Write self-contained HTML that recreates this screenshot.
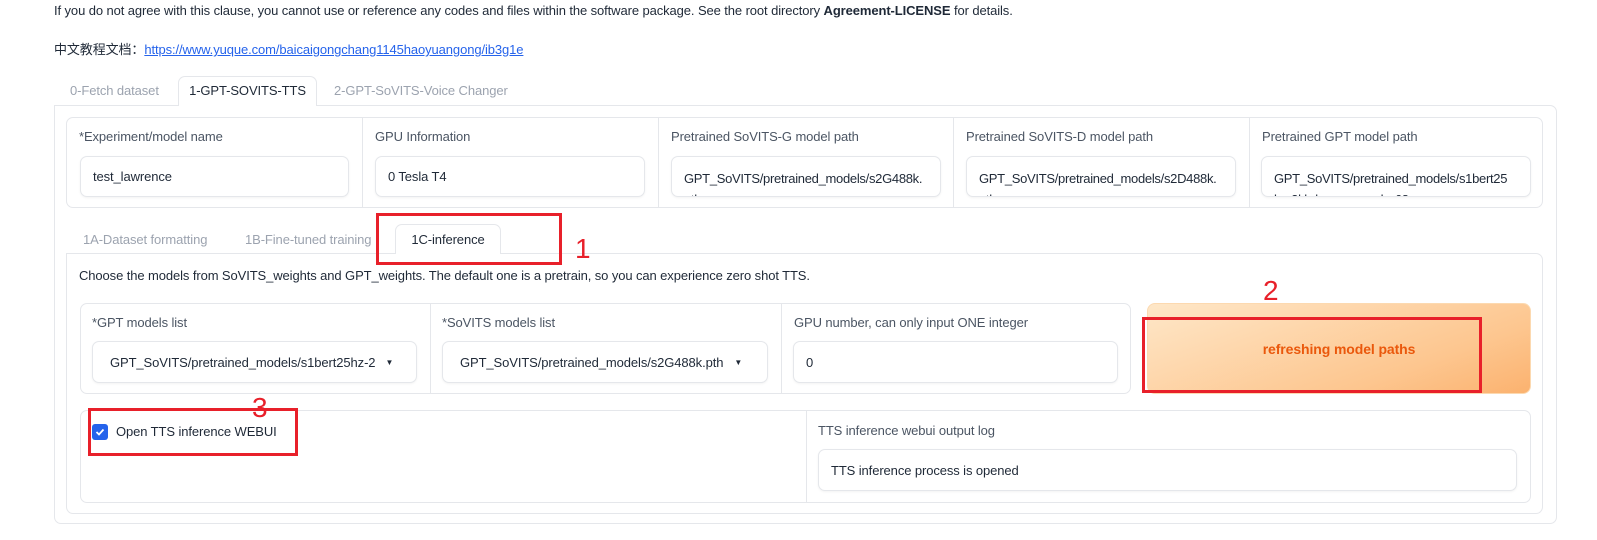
<!DOCTYPE html>
<html><head><meta charset="utf-8"><style>
*{box-sizing:border-box;margin:0;padding:0}
body{width:1597px;height:540px;background:#fff;font-family:"Liberation Sans","Noto Sans CJK SC",sans-serif;font-size:13px;color:#1f2937;position:relative;overflow:hidden;letter-spacing:-0.1px}
.a{position:absolute;white-space:nowrap}
.lbl{color:#4b5563;font-size:13px;line-height:16px}
.box{position:absolute;border:1px solid #e5e7eb;border-radius:7px;background:#fff}
.inp{position:absolute;border:1px solid #e5e7eb;border-radius:7px;background:#fff;box-shadow:0 1px 2px rgba(0,0,0,.05);padding:0 12px;display:flex;align-items:center;font-size:13px;color:#1f2937;white-space:nowrap;overflow:hidden}
.wrap{display:block;padding-top:11px;line-height:21px;letter-spacing:-0.3px}
.vl{position:absolute;width:1px;background:#e5e7eb}
.red{position:absolute;border:3px solid #e8202a}
.num{position:absolute;color:#e8202a;font-size:28px;line-height:24px}
.tab{position:absolute;font-size:13px;color:#9ca3af;white-space:nowrap;line-height:16px}
</style></head><body>
<div class="a" style="left:54px;top:3px;line-height:16px">If you do not agree with this clause, you cannot use or reference any codes and files within the software package. See the root directory <b>Agreement-LICENSE</b> for details.</div>
<div class="a" style="left:54px;top:42px;line-height:16px">中文教程文档：<span style="color:#2563eb;text-decoration:underline">https://www.yuque.com/baicaigongchang1145haoyuangong/ib3g1e</span></div>

<div class="box" style="left:54px;top:105px;width:1503px;height:419px;border-radius:0 7px 7px 7px"></div>
<div class="tab" style="left:70px;top:83px">0-Fetch dataset</div>
<div class="a" style="left:178px;top:76px;width:139px;height:30px;border:1px solid #e5e7eb;border-bottom:none;border-radius:7px 7px 0 0;background:#fff;text-align:center;line-height:28px;color:#1f2937">1-GPT-SOVITS-TTS</div>
<div class="tab" style="left:334px;top:83px">2-GPT-SoVITS-Voice Changer</div>

<div class="box" style="left:66px;top:117px;width:1477px;height:91px"></div>
<div class="vl" style="left:362px;top:118px;height:89px"></div>
<div class="vl" style="left:658px;top:118px;height:89px"></div>
<div class="vl" style="left:953px;top:118px;height:89px"></div>
<div class="vl" style="left:1249px;top:118px;height:89px"></div>
<div class="lbl a" style="left:79px;top:129px">*Experiment/model name</div>
<div class="lbl a" style="left:375px;top:129px">GPU Information</div>
<div class="lbl a" style="left:671px;top:129px">Pretrained SoVITS-G model path</div>
<div class="lbl a" style="left:966px;top:129px">Pretrained SoVITS-D model path</div>
<div class="lbl a" style="left:1262px;top:129px">Pretrained GPT model path</div>
<div class="inp" style="left:80px;top:156px;width:269px;height:41px">test_lawrence</div>
<div class="inp" style="left:375px;top:156px;width:270px;height:41px">0 Tesla T4</div>
<div class="inp wrap" style="left:671px;top:156px;width:270px;height:41px">GPT_SoVITS/pretrained_models/s2G488k.<br>pth</div>
<div class="inp wrap" style="left:966px;top:156px;width:270px;height:41px">GPT_SoVITS/pretrained_models/s2D488k.<br>pth</div>
<div class="inp wrap" style="left:1261px;top:156px;width:270px;height:41px">GPT_SoVITS/pretrained_models/s1bert25<br>hz-2kh-longer-epoch=68e-</div>

<div class="box" style="left:66px;top:253px;width:1477px;height:261px;border-radius:0 7px 7px 7px"></div>
<div class="tab" style="left:83px;top:232px">1A-Dataset formatting</div>
<div class="tab" style="left:245px;top:232px">1B-Fine-tuned training</div>
<div class="a" style="left:395px;top:224px;width:106px;height:30px;border:1px solid #e5e7eb;border-bottom:none;border-radius:7px 7px 0 0;background:#fff;text-align:center;line-height:30px;color:#1f2937">1C-inference</div>
<div class="a" style="left:79px;top:268px;line-height:16px">Choose the models from SoVITS_weights and GPT_weights. The default one is a pretrain, so you can experience zero shot TTS.</div>

<div class="box" style="left:80px;top:303px;width:1051px;height:91px"></div>
<div class="vl" style="left:430px;top:304px;height:89px"></div>
<div class="vl" style="left:781px;top:304px;height:89px"></div>
<div class="lbl a" style="left:92px;top:315px">*GPT models list</div>
<div class="lbl a" style="left:442px;top:315px">*SoVITS models list</div>
<div class="lbl a" style="left:794px;top:315px">GPU number, can only input ONE integer</div>
<div class="inp" style="left:92px;top:341px;width:325px;height:42px;padding-left:17px">GPT_SoVITS/pretrained_models/s1bert25hz-2<span style="margin-left:10px;font-size:8px">▼</span></div>
<div class="inp" style="left:442px;top:341px;width:326px;height:42px;padding-left:17px">GPT_SoVITS/pretrained_models/s2G488k.pth<span style="margin-left:11px;font-size:8px">▼</span></div>
<div class="inp" style="left:793px;top:341px;width:325px;height:42px">0</div>
<div class="a" style="left:1147px;top:303px;width:384px;height:91px;border-radius:8px;background:linear-gradient(160deg,#fee7c8,#fdc68f 70%,#fbb26f);border:1px solid #fcd9b0;display:flex;align-items:center;justify-content:center;color:#ea580c;font-weight:bold;font-size:14px">refreshing model paths</div>

<div class="box" style="left:80px;top:410px;width:1451px;height:93px"></div>
<div class="vl" style="left:806px;top:411px;height:91px"></div>
<div class="a" style="left:92px;top:424px;width:16px;height:16px;border-radius:3px;background:#2563eb"><svg width="16" height="16"><path d="M4.5 8l2.5 2.5 4.5-5" stroke="#fff" stroke-width="1.8" fill="none"/></svg></div>
<div class="a" style="left:116px;top:424px;line-height:16px">Open TTS inference WEBUI</div>
<div class="lbl a" style="left:818px;top:423px">TTS inference webui output log</div>
<div class="inp" style="left:818px;top:449px;width:699px;height:42px">TTS inference process is opened</div>

<div class="red" style="left:376px;top:213px;width:186px;height:52px"></div>
<div class="num" style="left:575px;top:237px">1</div>
<div class="red" style="left:1142px;top:317px;width:340px;height:76px"></div>
<div class="num" style="left:1263px;top:279px">2</div>
<div class="red" style="left:88px;top:408px;width:210px;height:48px"></div>
<div class="num" style="left:252px;top:396px">3</div>
</body></html>
